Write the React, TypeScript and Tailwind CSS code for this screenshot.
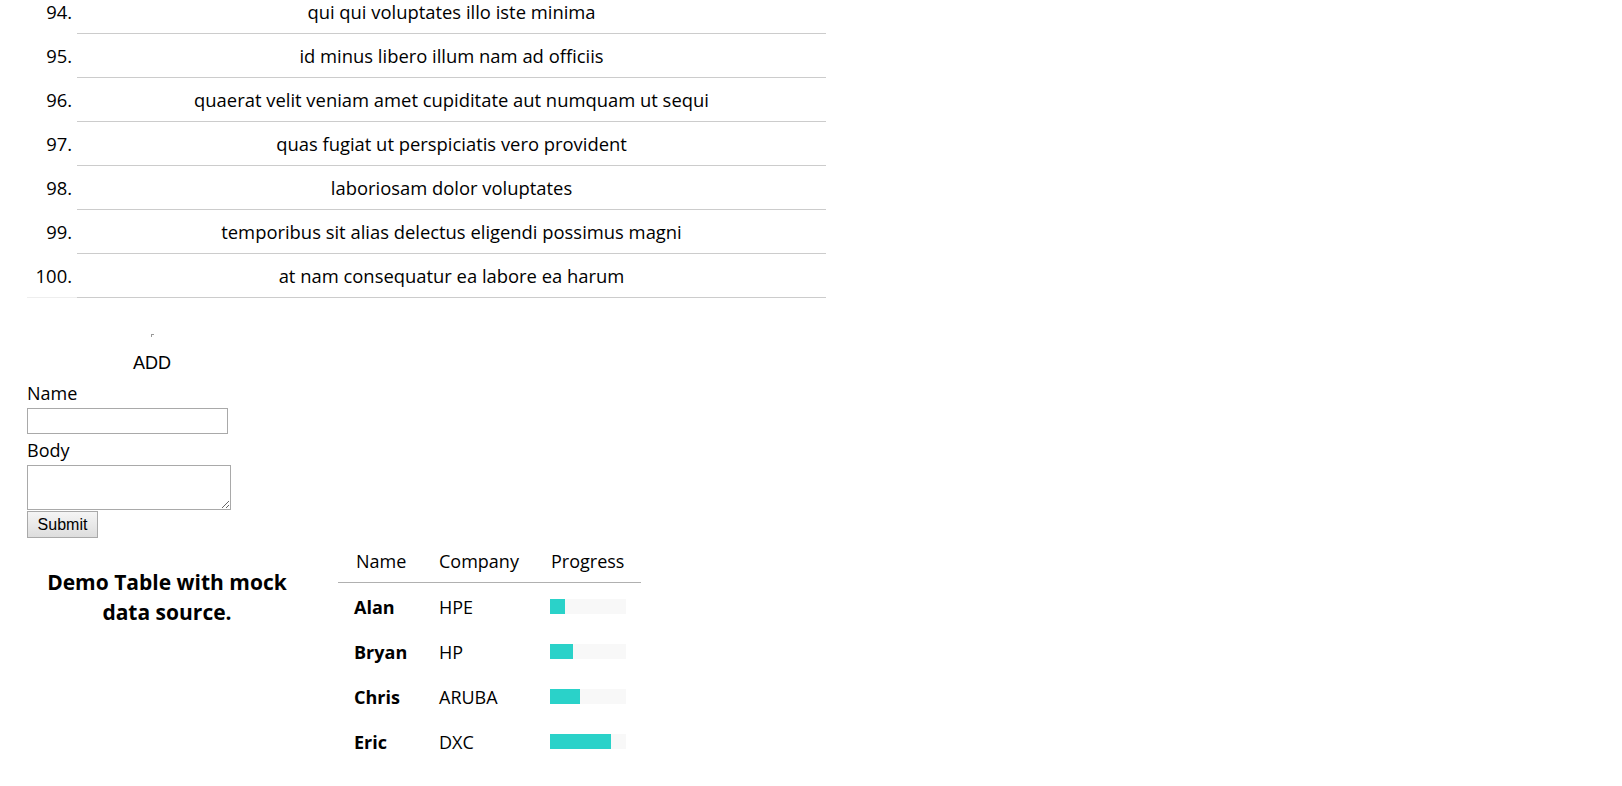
import React from "react";

const rows: [number, string][] = [
  [94, "qui qui voluptates illo iste minima"],
  [95, "id minus libero illum nam ad officiis"],
  [96, "quaerat velit veniam amet cupiditate aut numquam ut sequi"],
  [97, "quas fugiat ut perspiciatis vero provident"],
  [98, "laboriosam dolor voluptates"],
  [99, "temporibus sit alias delectus eligendi possimus magni"],
  [100, "at nam consequatur ea labore ea harum"],
];

const people: [string, string, number][] = [
  ["Alan", "HPE", 20],
  ["Bryan", "HP", 30],
  ["Chris", "ARUBA", 40],
  ["Eric", "DXC", 80],
];

export default function App() {
  return (
    <div className="min-h-screen bg-white text-black font-['Open_Sans','Noto_Sans',sans-serif] text-[18px] leading-[24px]">
      <div className="-mt-[10px] pl-[27px] text-[18.4px]">
        {rows.map(([n, t], i) => (
          <div key={n} className="flex h-[44px]">
            <div
              className={
                "w-[50px] flex items-center justify-end pr-[5px] " +
                (i === rows.length - 1 ? "border-b border-[#eeeeee]" : "")
              }
            >
              {n}.
            </div>
            <div className="w-[749px] flex items-center justify-center border-b border-[#cccccc]">
              {t}
            </div>
          </div>
        ))}
      </div>

      <div className="ml-[27px] w-[250px] flex flex-col items-center pt-[36px]">
        <span className="block w-[3px] h-[3px] border-l border-t border-[#999999]" />
        <div className="mt-[14px] font-['Liberation_Sans',Arial,sans-serif] text-[18px] leading-[24px]">
          ADD
        </div>
      </div>

      <form className="ml-[27px] mt-[6px] flex flex-col items-start" onSubmit={(e) => e.preventDefault()}>
        <label className="leading-[24px]">Name</label>
        <input
          type="text"
          className="mt-[3px] w-[201px] h-[26px] border border-[#a9a9a9] bg-white outline-none"
        />
        <label className="mt-[4px] leading-[24px]">Body</label>
        <textarea className="mt-[3px] w-[204px] h-[45px] border border-[#a9a9a9] bg-white outline-none" />
        <button
          type="submit"
          className="mt-[1px] w-[71px] h-[27px] border border-[#a9a9a9] bg-gradient-to-b from-[#f5f5f5] to-[#dddddd] font-['Liberation_Sans',Arial,sans-serif] text-[16px] leading-[20px] text-black"
        >
          Submit
        </button>
      </form>

      <div className="flex items-start mt-[1px]">
        <div className="ml-[27px] w-[280px] pt-[28px] text-center font-bold text-[21px] leading-[30px]">
          Demo Table with mock
          <br />
          data source.
        </div>
        <div className="ml-[31px] w-[303px]">
          <div className="flex h-[44px] items-center border-b border-[#b0b0b0]">
            <div className="w-[85px] pl-[18px]">Name</div>
            <div className="w-[112px] pl-[16px]">Company</div>
            <div className="w-[106px] pl-[16px]">Progress</div>
          </div>
          {people.map(([name, co, v]) => (
            <div key={name} className="flex h-[45px] items-center pt-[2px]">
              <div className="w-[85px] pl-[16px] font-bold">{name}</div>
              <div className="w-[112px] pl-[16px]">{co}</div>
              <div className="w-[106px] pl-[15px]">
                <div className="w-[76px] h-[15px] bg-[#f8f8f8]">
                  <div className="h-full bg-[#2ad2c9]" style={{ width: `${v}%` }} />
                </div>
              </div>
            </div>
          ))}
        </div>
      </div>
    </div>
  );
}
